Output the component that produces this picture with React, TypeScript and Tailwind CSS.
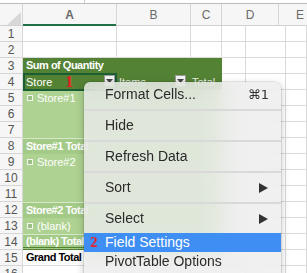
import React from 'react';

const headCell = "h-full flex items-center justify-center border-r border-[#d6d6d6] text-[12px] text-[#6a6a6a]";
const rowHead = "w-[23px] shrink-0 h-full flex items-center justify-center bg-[#f6f6f6] border-r border-b border-[#d6d6d6] text-[12px] text-[#555]";
const cell = "h-full border-r border-b border-[#dadada]";

type PivotRow = { n: number; kind: 'item' | 'blank' | 'sub'; label?: string; last?: boolean };

const pivotRows: PivotRow[] = [
  { n: 5, kind: 'item', label: 'Store#1' },
  { n: 6, kind: 'blank' },
  { n: 7, kind: 'blank' },
  { n: 8, kind: 'sub', label: 'Store#1 Total' },
  { n: 9, kind: 'item', label: 'Store#2' },
  { n: 10, kind: 'blank' },
  { n: 11, kind: 'blank' },
  { n: 12, kind: 'sub', label: 'Store#2 Total' },
  { n: 13, kind: 'item', label: '(blank)' },
  { n: 14, kind: 'sub', label: '(blank) Total', last: true },
];

function DropBox({ className }: { className: string }) {
  return (
    <span className={`absolute top-[1px] w-[11px] h-[12px] bg-[#f2f2f2] border border-[#9a9a9a] flex items-center justify-center ${className}`}>
      <svg width="7" height="4" viewBox="0 0 7 4"><path d="M0 0h7L3.5 4z" fill="#444" /></svg>
    </span>
  );
}

function Row({ n, children, green }: { n: number; children: React.ReactNode; green?: boolean }) {
  return (
    <div className="flex h-[16px]">
      <div className={`${rowHead} ${green ? 'text-[#1d7a40]' : ''}`}>{n}</div>
      {children}
      <div className={`${cell} w-[24px] shrink-0`} />
      <div className={`${cell} w-[40px] shrink-0`} />
      <div className={`${cell} flex-1`} />
    </div>
  );
}

function WhiteABC() {
  return (
    <>
      <div className={`${cell} w-[94px] shrink-0`} />
      <div className={`${cell} w-[74px] shrink-0`} />
      <div className={`${cell} w-[31px] shrink-0`} />
    </>
  );
}

function MenuItem({ label, right, arrow, active, mark }: { label: string; right?: string; arrow?: boolean; active?: boolean; mark?: string }) {
  return (
    <div className={`relative h-[19px] flex items-center justify-between pl-[21px] pr-[12px] ${active ? 'bg-[#3f8ef3] text-white' : ''}`}>
      {mark && (
        <span className="absolute left-[6px] top-0 h-full flex items-center font-['Liberation_Serif'] font-bold text-[15px] text-[#e8222a]">{mark}</span>
      )}
      <span className="whitespace-nowrap">{label}</span>
      {right && <span className="font-['DejaVu_Sans','Liberation_Sans',sans-serif] text-[13px] text-[#333]">{right}</span>}
      {arrow && (
        <svg width="9" height="10" viewBox="0 0 9 10" className="mr-px"><path d="M0 0L9 5L0 10z" fill="#333" /></svg>
      )}
    </div>
  );
}

function Sep() {
  return (
    <div className="h-[12px] flex items-center">
      <div className="h-[2px] w-full bg-[#d9d9d9]" />
    </div>
  );
}

export default function App() {
  return (
    <div className="relative w-[307px] h-[273px] overflow-hidden bg-white font-['Liberation_Sans',Arial,sans-serif]">
      {/* toolbar edge */}
      <div className="h-[3px] flex">
        <div className="w-[85px] border-r border-[#cfcfcf]" />
      </div>
      <div className="h-px bg-[#bcbcbc]" />

      {/* column headers */}
      <div className="flex h-[22px] bg-[#f6f6f6] border-b border-[#d0d0d0]">
        <div className="relative w-[23px] shrink-0 h-full border-r border-[#d6d6d6]">
          <svg width="14" height="13" viewBox="0 0 14 13" className="absolute left-[7px] top-[8px]">
            <path d="M14 0V13H0z" fill="#d8d8d8" />
          </svg>
        </div>
        <div className={`${headCell} relative w-[94px] shrink-0 text-[#1d7a40] font-bold`}>
          A
          <div className="absolute left-0 right-0 bottom-[-1px] h-[2px] bg-[#1e7145]" />
        </div>
        <div className={`${headCell} w-[74px] shrink-0`}>B</div>
        <div className={`${headCell} w-[31px] shrink-0`}>C</div>
        <div className={`${headCell} w-[57px] shrink-0`}>D</div>
        <div className={`${headCell} flex-1 justify-start pl-[17px] border-r-0`}>E</div>
      </div>

      {/* sheet body */}
      <Row n={1}><WhiteABC /></Row>
      <Row n={2}><WhiteABC /></Row>
      <Row n={3}>
        <div className="w-[199px] shrink-0 h-full bg-[#548235] border-b border-[#548235] pl-[3px] flex items-center text-[11px] font-bold tracking-[-0.5px] text-white whitespace-nowrap">
          Sum of Quantity
        </div>
      </Row>
      <Row n={4} green>
        <div className="w-[199px] shrink-0 h-full bg-[#548235] flex text-[11px] text-white">
          <div className="relative w-[94px] shrink-0 h-full flex items-center pl-[3px]">
            <div className="absolute left-0 right-0 -top-px -bottom-px border-2 border-[#1b5e34]" />
            <span>Store</span>
            <span className="ml-[13px] font-['Liberation_Serif'] font-black text-[16px] leading-none text-[#e51f24]">1</span>
            <DropBox className="left-[81px]" />
          </div>
          <div className="relative w-[74px] shrink-0 h-full flex items-center pl-[2px] text-[#e8eee4]">
            Items
            <DropBox className="left-[58px]" />
          </div>
          <div className="w-[31px] shrink-0 h-full flex items-center pl-px text-[#e8eee4]">Total</div>
        </div>
      </Row>
      {pivotRows.map((r) => (
        <Row key={r.n} n={r.n}>
          <div
            className={`w-[199px] shrink-0 h-full flex items-center pl-[3px] text-[11px] text-white whitespace-nowrap ${
              r.kind === 'sub'
                ? 'bg-[#a3cb87] border-t border-[#d6e8c9] font-bold tracking-[-0.5px]'
                : 'bg-[#aed292]'
            } ${r.last ? 'border-b-[3px] border-double border-b-[#548235]' : ''}`}
          >
            {r.kind === 'item' && (
              <>
                <span className="w-[6px] h-[6px] border border-[#f4f4f4] bg-[#9cbf84] mr-[4px] ml-px" />
                <span>{r.label}</span>
              </>
            )}
            {r.kind === 'sub' && r.label}
          </div>
        </Row>
      ))}
      <Row n={15}>
        <div className={`${cell} w-[94px] shrink-0 flex items-center pl-[3px] text-[11px] font-bold tracking-[-0.5px] text-black whitespace-nowrap`}>
          Grand Total
        </div>
        <div className={`${cell} w-[74px] shrink-0`} />
        <div className={`${cell} w-[31px] shrink-0`} />
      </Row>
      <Row n={16}><WhiteABC /></Row>

      {/* context menu */}
      <div className="absolute left-[84px] top-[82px] w-[197px] h-[210px] rounded-t-[6px] bg-[#ececec]/80 backdrop-blur-md pt-[3px] text-[14px] text-[#2a2a2a] shadow-[0_0_0_0.5px_rgba(0,0,0,0.18),0_3px_10px_rgba(0,0,0,0.22)]">
        <MenuItem label="Format Cells..." right="⌘1" />
        <Sep />
        <MenuItem label="Hide" />
        <Sep />
        <MenuItem label="Refresh Data" />
        <Sep />
        <MenuItem label="Sort" arrow />
        <Sep />
        <MenuItem label="Select" arrow />
        <div className="h-[5px]" />
        <MenuItem label="Field Settings" active mark="2" />
        <MenuItem label="PivotTable Options" />
      </div>
    </div>
  );
}
